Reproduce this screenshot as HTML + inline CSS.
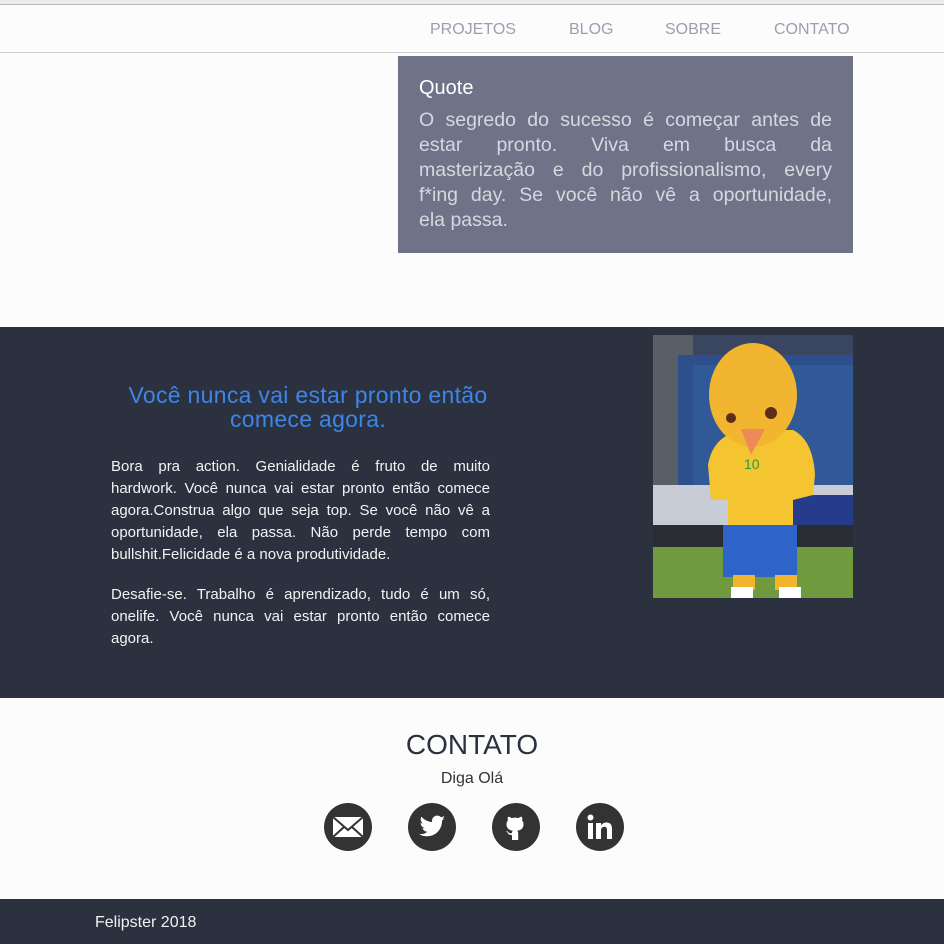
<!DOCTYPE html>
<html><head><meta charset="utf-8">
<style>
*{margin:0;padding:0;box-sizing:border-box}
body{width:944px;height:944px;overflow:hidden;background:#fcfcfc;font-family:"Liberation Sans",sans-serif;position:relative}
.abs{position:absolute}
.top{left:0;top:0;width:944px;height:5px;background:#ececec;border-bottom:1px solid #b8b8b8}
.nav{left:0;top:5px;width:944px;height:48px;background:#fcfcfc;border-bottom:1px solid #cfcfcf}
.nav span{position:absolute;top:16px;font-size:16px;color:#9a9fb0}
.quote{left:398px;top:56px;width:455px;height:197px;background:#6e7388;padding:21px 21px}
.quote h3{font-weight:normal;color:#fff;font-size:20px;margin-bottom:8px}
.quote p{color:#d6d8e0;font-size:19.5px;line-height:25px}
.j{display:block;white-space:nowrap;text-align:justify;text-align-last:justify}
.l{display:block;white-space:nowrap}
.dark{left:0;top:327px;width:944px;height:371px;background:#2c3140}
.h2{left:111px;top:383px;width:394px;text-align:center;color:#3d86e8;font-size:23px;line-height:24px;letter-spacing:0.3px}
.txt{left:111px;width:379px;color:#f2f2f2;font-size:15px;line-height:22px}
.ct{left:0;top:729px;width:944px;text-align:center;color:#2c3140;font-size:28px}
.ola{left:0;top:770px;width:944px;text-align:center;color:#333;font-size:16px}
.ic{top:803px;width:48px;height:48px;border-radius:50%;background:#333}
.ic svg{position:absolute;left:0;top:0}
.foot{left:0;top:899px;width:944px;height:45px;background:#2c3140;color:#f2f2f2;font-size:16px;padding:15px 95px}
</style></head><body>
<div class="abs top"></div>
<div class="abs nav">
<span style="left:430px">PROJETOS</span><span style="left:569px">BLOG</span><span style="left:665px">SOBRE</span><span style="left:774px">CONTATO</span>
</div>
<div class="abs quote"><h3>Quote</h3><p><span class="j">O segredo do sucesso é começar antes de</span><span class="j">estar pronto. Viva em busca da</span><span class="j">masterização e do profissionalismo, every</span><span class="j">f*ing day. Se você não vê a oportunidade,</span><span class="l">ela passa.</span></p></div>
<div class="abs dark"></div>
<div class="abs h2">Você nunca vai estar pronto então comece agora.</div>
<div class="abs txt" style="top:456px"><span class="j">Bora pra action. Genialidade é fruto de muito</span><span class="j">hardwork. Você nunca vai estar pronto então comece</span><span class="j">agora.Construa algo que seja top. Se você não vê a</span><span class="j">oportunidade, ela passa. Não perde tempo com</span><span class="l">bullshit.Felicidade é a nova produtividade.</span></div>
<div class="abs txt" style="top:584px"><span class="j">Desafie-se. Trabalho é aprendizado, tudo é um só,</span><span class="j">onelife. Você nunca vai estar pronto então comece</span><span class="l">agora.</span></div>
<svg class="abs" style="left:653px;top:335px" width="200" height="263" viewBox="0 0 200 263">
<rect width="200" height="263" fill="#3a4560"/>
<rect x="0" y="0" width="40" height="150" fill="#5a5e66"/>
<rect x="25" y="20" width="175" height="140" fill="#2d4f8c"/>
<rect x="40" y="30" width="160" height="120" fill="#35609f" opacity=".6"/>
<rect x="0" y="150" width="200" height="40" fill="#c8ccd6"/>
<rect x="120" y="160" width="80" height="50" fill="#253c8a"/>
<rect x="0" y="190" width="200" height="22" fill="#2a2d33"/>
<rect x="0" y="212" width="200" height="51" fill="#6f9a3e"/>
<path d="M55 130 Q60 100 90 95 L140 95 Q160 105 162 140 L160 160 L140 165 L140 195 L75 195 L75 165 L58 165 Z" fill="#f4c531"/>
<ellipse cx="100" cy="60" rx="44" ry="52" fill="#f2b52f"/>
<path d="M88 94 L98 120 L112 94 Z" fill="#ee8a5a"/>
<circle cx="118" cy="78" r="6" fill="#5a2e1a"/>
<circle cx="78" cy="83" r="5" fill="#5a2e1a"/>
<rect x="70" y="190" width="74" height="52" fill="#2e64c9"/>
<rect x="80" y="240" width="22" height="15" fill="#f2b52f"/>
<rect x="122" y="240" width="22" height="15" fill="#f2b52f"/>
<rect x="78" y="252" width="22" height="11" fill="#fff"/>
<rect x="126" y="252" width="22" height="11" fill="#fff"/>
<text x="91" y="134" font-size="14" fill="#2a9a3a" font-family="Liberation Sans">10</text>
</svg>
<div class="abs ct">CONTATO</div>
<div class="abs ola">Diga Olá</div>
<div class="abs ic" style="left:324px"><svg width="48" height="48"><rect x="9" y="14" width="30" height="20" fill="#fff"/><path d="M9 14 L24 27 L39 14 M9 34 L20 24 M39 34 L28 24" stroke="#333" stroke-width="2" fill="none"/></svg></div>
<div class="abs ic" style="left:408px"><svg width="48" height="48" viewBox="0 0 48 48"><path d="M37 15c-1 .5-2 .8-3 .9 1.1-.7 1.9-1.7 2.3-2.9-1 .6-2.1 1-3.3 1.3a5.2 5.2 0 0 0-8.9 4.7c-4.3-.2-8.1-2.3-10.7-5.4-1.4 2.4-.7 5.4 1.6 6.9-.9 0-1.7-.3-2.4-.6 0 2.5 1.8 4.7 4.2 5.1-.8.2-1.6.3-2.4.1.7 2.1 2.6 3.5 4.9 3.6A10.5 10.5 0 0 1 11 31c2.3 1.5 5 2.3 8 2.3 9.7 0 15-8 15-15v-.7c1-.7 1.9-1.6 2.6-2.6z" fill="#fff"/></svg></div>
<div class="abs ic" style="left:492px"><svg width="48" height="48" viewBox="0 0 48 48"><path d="M20 37v-5c-3 .5-4-1.5-4.5-2.5-.4-.8-1.2-1.3-1.8-1.6 1-.3 2 .3 2.6 1.2.8 1.2 2 1.5 3.6 1-.1-1 .4-1.8 1-2.3-3.8-.5-6.4-2.3-6.4-6.5 0-1.5.5-2.8 1.4-3.8-.2-.8-.4-2.3.2-3.8 1.4-.1 2.9.9 3.6 1.4a12 12 0 0 1 6.6 0c.7-.5 2.2-1.5 3.6-1.4.6 1.5.4 3 .2 3.8.9 1 1.4 2.3 1.4 3.8 0 4.2-2.6 6-6.4 6.5.7.6 1.1 1.6 1.1 2.8V37z" fill="#fff"/></svg></div>
<div class="abs ic" style="left:576px"><svg width="48" height="48"><rect x="12" y="20" width="5" height="16" fill="#fff"/><circle cx="14.5" cy="14.5" r="3" fill="#fff"/><path d="M20 20h5v2.5c1-1.8 3-3 5.5-3 4 0 5.5 2.5 5.5 6.5V36h-5v-9c0-2-.7-3.3-2.5-3.3S25 25 25 27v9h-5z" fill="#fff"/></svg></div>
<div class="abs foot">Felipster 2018</div>
</body></html>
